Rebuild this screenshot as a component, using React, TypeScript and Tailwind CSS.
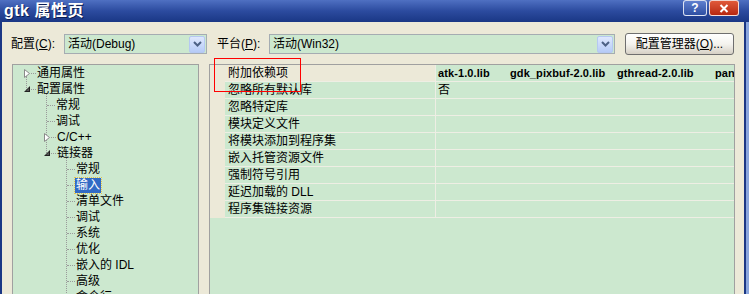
import React from 'react';

const FONT = { fontFamily: '"Liberation Sans", "Noto Sans CJK SC", sans-serif' };

const TREE = [
  { level: 0, label: '通用属性', expander: 'closed' },
  { level: 0, label: '配置属性', expander: 'open' },
  { level: 1, label: '常规' },
  { level: 1, label: '调试' },
  { level: 1, label: 'C/C++', expander: 'closed' },
  { level: 1, label: '链接器', expander: 'open' },
  { level: 2, label: '常规' },
  { level: 2, label: '输入', selected: true },
  { level: 2, label: '清单文件' },
  { level: 2, label: '调试' },
  { level: 2, label: '系统' },
  { level: 2, label: '优化' },
  { level: 2, label: '嵌入的 IDL' },
  { level: 2, label: '高级' },
  { level: 2, label: '命令行' },
];

const PROPS = [
  '附加依赖项',
  '忽略所有默认库',
  '忽略特定库',
  '模块定义文件',
  '将模块添加到程序集',
  '嵌入托管资源文件',
  '强制符号引用',
  '延迟加载的 DLL',
  '程序集链接资源',
];

const Expander = ({ open }: { open: boolean }) =>
  open ? (
    <svg width="8" height="8" viewBox="0 0 8 8" className="shrink-0">
      <path d="M7 1 L7 7 L1 7 Z" fill="#222" />
      <path d="M6 3 L6 6 L3 6 Z" fill="#555" />
    </svg>
  ) : (
    <svg width="8" height="9" viewBox="0 0 8 9" className="shrink-0">
      <path d="M1.5 0.5 L6.5 4.5 L1.5 8.5 Z" fill="#fff" stroke="#8a8a8a" strokeWidth="1" />
    </svg>
  );

const DropButton = () => (
  <div className="w-[16px] h-[17px] bg-gradient-to-b from-[#dfe8fd] to-[#b6cbf7] border border-[#b5c8f2] rounded-[2px] flex items-center justify-center">
    <svg width="9" height="6" viewBox="0 0 9 6">
      <path d="M1 1 L4.5 4.5 L8 1" fill="none" stroke="#4d6185" strokeWidth="2" />
    </svg>
  </div>
);

export default function App() {
  return (
    <div className="relative w-[749px] h-[294px] overflow-hidden flex flex-col bg-[#ece9d8] text-[12px] text-black" style={FONT}>
      {/* title bar */}
      <div className="h-[22px] shrink-0 flex items-center justify-between bg-gradient-to-b from-[#4f70c2] via-[#2c4b9f] to-[#1a3785] pl-[4px] pr-[10px]">
        <span className="text-white font-bold text-[16px] leading-none tracking-[0.5px] [text-shadow:1px_1px_0_#0b1c52]">gtk 属性页</span>
        <div className="flex gap-[2px] -mt-[6px]">
          <div className="w-[24px] h-[16px] rounded-[3px] border border-white/80 bg-gradient-to-b from-[#5f7fcf] to-[#2f4fa3] flex items-center justify-center text-white font-bold text-[12px] leading-none">?</div>
          <div className="w-[30px] h-[16px] rounded-[3px] border border-white/80 bg-gradient-to-b from-[#e0593a] to-[#b7260f] flex items-center justify-center">
            <svg width="10" height="9" viewBox="0 0 10 9">
              <path d="M1.5 1 L8.5 8 M8.5 1 L1.5 8" stroke="#fff" strokeWidth="2" />
            </svg>
          </div>
        </div>
      </div>

      {/* body */}
      <div className="flex-1 flex min-h-0">
        <div className="w-[2px] bg-[#1b3785] shrink-0" />
        <div className="flex-1 flex flex-col pl-[10px] pt-[11px]">
          {/* config row */}
          <div className="h-[22px] flex items-center">
            <span className="w-[53px] -ml-[1px]">配置(<u>C</u>):</span>
            <div className="w-[143px] h-[20px] border border-[#a5acb2] bg-[#cce8cf] flex items-center justify-between pl-[3px] pr-[1px]">
              <span>活动(Debug)</span>
              <DropButton />
            </div>
            <span className="ml-[10px] w-[52px]">平台(<u>P</u>):</span>
            <div className="w-[346px] h-[20px] border border-[#a5acb2] bg-[#cce8cf] flex items-center justify-between pl-[3px] pr-[1px]">
              <span>活动(Win32)</span>
              <DropButton />
            </div>
            <div className="ml-[10px] w-[109px] h-[22px] rounded-[3px] border border-[#6f6f6f] bg-gradient-to-b from-white via-[#f4f3ee] to-[#d6d0c5] flex items-center justify-center">
              配置管理器(<u>O</u>)...
            </div>
          </div>

          {/* panels */}
          <div className="flex mt-[9px] flex-1 min-h-0">
            {/* tree */}
            <div className="w-[187px] shrink-0 border border-[#a0a0a0] border-b-0 bg-[#cce8cf] relative">
              {/* vertical dotted lines */}
              <div className="absolute left-[13px] top-[11px] h-[16px] border-l border-dotted border-[#9a9a9a]" />
              <div className="absolute left-[33px] top-[28px] h-[62px] border-l border-dotted border-[#9a9a9a]" />
              <div className="absolute left-[53px] top-[92px] h-[150px] border-l border-dotted border-[#9a9a9a]" />
              {TREE.map((t, i) => (
                <div key={i} className="h-[16px] flex items-center relative" style={{ paddingLeft: 10 + t.level * 20 }}>
                  {t.expander ? (
                    <div className="w-[8px] flex items-center justify-center">
                      <Expander open={t.expander === 'open'} />
                    </div>
                  ) : (
                    <div className="w-[8px]" />
                  )}
                  <div className="border-t border-dotted border-[#9a9a9a]" style={{ marginLeft: t.expander ? 0 : -4, width: t.expander ? 5 : 8 }} />
                  <span
                    className={
                      t.selected
                        ? 'px-[1px] bg-[#316ac5] text-white outline outline-1 outline-dotted outline-[#e8c34a] leading-[15px]'
                        : 'ml-[1px] leading-[16px]'
                    }
                  >
                    {t.label}
                  </span>
                </div>
              ))}
            </div>

            {/* property grid */}
            <div className="ml-[10px] w-[526px] shrink-0 border border-[#a0a0a0] border-b-0 bg-[#cce8cf] flex flex-col">
              {PROPS.map((p, i) => (
                <div key={i} className="h-[17px] flex">
                  <div className="w-[15px] bg-[#ece9d8] shrink-0" />
                  <div className={`w-[211px] shrink-0 pl-[3px] flex items-center border-b border-r border-[#eeeee4] ${i === 0 ? 'bg-[#ece9d8]' : ''}`}>
                    {p}
                  </div>
                  <div className="flex-1 min-w-0 flex items-center border-b border-[#eeeee4] pl-[2px] overflow-hidden whitespace-nowrap">
                    {i === 0 && (
                      <span className="font-bold text-[11px] tracking-[0.1px]">
                        <span className="inline-block w-[72px]">atk-1.0.lib</span>
                        <span className="inline-block w-[107px]">gdk_pixbuf-2.0.lib</span>
                        <span className="inline-block w-[98px]">gthread-2.0.lib</span>
                        <span>pan</span>
                      </span>
                    )}
                    {i === 1 && <span>否</span>}
                  </div>
                </div>
              ))}
            </div>
            <div className="flex-1" />
          </div>
        </div>
        <div className="w-[2px] bg-[#1b3785] shrink-0" />
        <div className="w-[3px] bg-[#8aa6dd] shrink-0" />
      </div>

      {/* annotation box */}
      <div className="absolute left-[214px] top-[58px] w-[87px] h-[34px] border border-[#ff0000] pointer-events-none" />
    </div>
  );
}
